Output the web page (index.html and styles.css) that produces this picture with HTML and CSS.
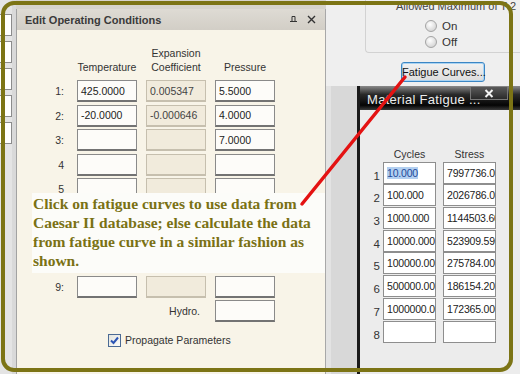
FILE: index.html
```html
<!DOCTYPE html>
<html lang="en">
<head>
  <meta charset="UTF-8">
  <meta name="viewport" content="width=device-width, initial-scale=1.0">
  <title>Edit Operating Conditions</title>
  <link rel="stylesheet" href="styles.css">
</head>
<body>
  <div class="screen">
    <!-- Edge of the window behind -->
    <div class="left-strip">
      <div class="stub"></div>
      <div class="stub"></div>
      <div class="stub"></div>
      <div class="stub"></div>
      <div class="stub"></div>
    </div>

    <!-- Edit Operating Conditions panel -->
    <section class="panel">
      <header class="panel-title">
        <span>Edit Operating Conditions</span>
        <span class="title-tools">
          <svg width="9" height="9" viewBox="0 0 9 9"><path d="M1 6.5h7M3 1.5v5M3 1.5h3v5" fill="none" stroke="#333" stroke-width="1"/></svg>
          <svg width="9" height="9" viewBox="0 0 9 9"><path d="M1 1l7 7M8 1l-7 7" stroke="#333" stroke-width="1.4"/></svg>
        </span>
      </header>
      <div class="panel-body">
        <div class="cond-grid">
          <span></span>
          <span class="head">Temperature</span>
          <span class="head">Expansion<br>Coefficient</span>
          <span class="head">Pressure</span>

          <span class="num">1:</span><div class="box">425.0000</div><div class="box off">0.005347</div><div class="box">5.5000</div>
          <span class="num">2:</span><div class="box">-20.0000</div><div class="box off">-0.000646</div><div class="box">4.0000</div>
          <span class="num">3:</span><div class="box"></div><div class="box off"></div><div class="box">7.0000</div>
          <span class="num">4</span><div class="box"></div><div class="box off"></div><div class="box"></div>
          <span class="num">5</span><div class="box"></div><div class="box off"></div><div class="box"></div>
          <span class="num"></span><div class="box"></div><div class="box off"></div><div class="box"></div>
          <span class="num"></span><div class="box"></div><div class="box off"></div><div class="box"></div>
          <span class="num"></span><div class="box"></div><div class="box off"></div><div class="box"></div>
          <span class="num">9:</span><div class="box"></div><div class="box off"></div><div class="box"></div>
          <span class="hydro">Hydro.</span><div class="box"></div>
        </div>
        <label class="propagate">
          <span class="check">
            <svg width="11" height="11" viewBox="0 0 11 11"><path d="M2 5.5l2.5 2.5 4.5-5.5" fill="none" stroke="#2c55b4" stroke-width="2"/></svg>
          </span>
          Propagate Parameters
        </label>
      </div>
    </section>

    <!-- Right side of the main dialog -->
    <div class="right">
      <div class="group">
        <div class="legend">Allowed Maximum of T 2</div>
        <div class="radio"><span class="dot"></span>On</div>
        <div class="radio"><span class="dot"></span>Off</div>
      </div>
      <button class="fatigue-btn">Fatigue Curves...</button>

      <div class="lower">
        <div class="gutter"></div>
        <div class="window">
          <div class="win-title">
            <span class="win-name">Material Fatigue ...</span>
            <span class="win-close">
              <svg width="10" height="9" viewBox="0 0 10 9"><path d="M1.5 1l7 7M8.5 1l-7 7" stroke="#f2f2f2" stroke-width="2"/></svg>
            </span>
          </div>
          <div class="win-body">
            <div class="fatigue-grid">
              <span></span><span class="fhead">Cycles</span><span class="fhead">Stress</span>
              <span class="fnum">1</span><div class="fbox"><span class="sel">10.000</span></div><div class="fbox">7997736.000</div>
              <span class="fnum">2</span><div class="fbox">100.000</div><div class="fbox">2026786.000</div>
              <span class="fnum">3</span><div class="fbox">1000.000</div><div class="fbox">1144503.600</div>
              <span class="fnum">4</span><div class="fbox">10000.000</div><div class="fbox">523909.590</div>
              <span class="fnum">5</span><div class="fbox">100000.000</div><div class="fbox">275784.000</div>
              <span class="fnum">6</span><div class="fbox">500000.000</div><div class="fbox">186154.200</div>
              <span class="fnum">7</span><div class="fbox">1000000.000</div><div class="fbox">172365.000</div>
              <span class="fnum">8</span><div class="fbox"></div><div class="fbox"></div>
            </div>
          </div>
        </div>
      </div>
    </div>

    <!-- Annotation over the screenshot -->
    <div class="callout">
      Click on fatigue curves to use data from<br>
      Caesar II database; else calculate the data<br>
      from fatigue curve in a similar fashion as<br>
      shown.
    </div>
    <svg class="pointer" width="520" height="374" viewBox="0 0 520 374">
      <line x1="405" y1="77" x2="302" y2="204" stroke="#e41212" stroke-width="3.5" stroke-linecap="round"/>
    </svg>
    <div class="frame"></div>
  </div>
</body>
</html>
```

FILE: styles.css
```css
/* Base Reset */
body {
  margin: 0;
  background: #c8c8c8;
  font-family: 'Liberation Sans', Arial, sans-serif;
  font-size: 10.5px;
  color: #222;
}

.screen {
  position: relative;
  display: flex;
  width: 520px;
  height: 374px;
  overflow: hidden;
  background: #d6d3cc;
}

/* Left edge with the fields of the window behind */
.left-strip {
  width: 12px;
  flex-shrink: 0;
  display: flex;
  flex-direction: column;
  gap: 5px;
  padding-top: 14px;
  background: #e4e4e4;
  border-right: 4px solid #d9d9d9;
}

.stub {
  height: 20px;
  background: #fff;
  border: 1px solid #8c8c8c;
  border-left: none;
}

/* Edit Operating Conditions panel */
.panel {
  width: 308px;
  flex-shrink: 0;
  margin-top: 9px;
  display: flex;
  flex-direction: column;
  border-left: 1px solid #a2a2a2;
  border-right: 1px solid #a8a8a8;
  background: #f8f4e8;
}

.panel-title {
  height: 21px;
  display: flex;
  align-items: center;
  justify-content: space-between;
  padding: 0 9px 0 8px;
  background: linear-gradient(#dedbd4, #d2cec6);
  font-weight: bold;
  font-size: 11px;
  color: #3a3a3a;
}

.title-tools {
  display: flex;
  gap: 9px;
}

.panel-body {
  padding-top: 16px;
}

.cond-grid {
  display: grid;
  grid-template-columns: 51px 60px 60px 60px;
  grid-template-rows: 32px;
  grid-auto-rows: 22px;
  column-gap: 9px;
  row-gap: 2.4px;
}

.head {
  align-self: end;
  padding-bottom: 4px;
  text-align: center;
  line-height: 14px;
  color: #333;
  white-space: nowrap;
}

.num {
  align-self: center;
  text-align: right;
  padding-right: 4px;
  color: #333;
}

.box {
  box-sizing: border-box;
  display: flex;
  align-items: center;
  padding-left: 3px;
  background: #fdfcf9;
  border: 1px solid #8a8a8a;
  border-bottom: 2px solid #737373;
  white-space: nowrap;
  overflow: hidden;
}

.box.off {
  background: #f1ebdc;
  border-color: #c6bfae;
  color: #444;
}

.hydro {
  grid-column: 1 / 4;
  align-self: center;
  text-align: right;
  padding-right: 6px;
  color: #333;
}

.propagate {
  display: flex;
  align-items: center;
  gap: 4px;
  margin: 12px 0 0 91px;
  height: 13px;
  color: #333;
}

.check {
  box-sizing: border-box;
  width: 13px;
  height: 13px;
  display: flex;
  align-items: center;
  justify-content: center;
  border: 1px solid #4b6a94;
  background: linear-gradient(135deg, #e4e4de, #fbfbf9);
}

/* Right side */
.right {
  flex: 1;
  min-width: 0;
  display: flex;
  flex-direction: column;
  background: #efefef;
}

.group {
  height: 59px;
  box-sizing: border-box;
  margin: -6px 0 0 39px;
  padding: 5px 0 0 59px;
  border: 1px solid #d2d2d2;
  border-right: none;
  border-radius: 4px 0 0 4px;
}

.legend {
  height: 12px;
  line-height: 12px;
  margin-left: -29px;
  font-size: 11px;
  color: #444;
  white-space: nowrap;
}

.group .legend + .radio {
  margin-top: 6px;
}

.radio {
  height: 16px;
  display: flex;
  align-items: center;
  gap: 5px;
  font-size: 11.5px;
  color: #333;
}

.dot {
  width: 10px;
  height: 10px;
  border-radius: 50%;
  border: 1px solid #a4a4a4;
  background: radial-gradient(circle at 40% 35%, #ffffff, #c9c9c9);
}

.fatigue-btn {
  width: 84px;
  height: 20px;
  margin: 9px 0 0 75px;
  padding: 0;
  border: 1px solid #3b86c4;
  border-radius: 3px;
  background: linear-gradient(#f2f2f2, #dcdcdc);
  box-shadow: inset 0 0 0 1px #a9d3f2;
  font-family: 'Liberation Sans', Arial, sans-serif;
  font-size: 11px;
  color: #111;
  white-space: nowrap;
}

.lower {
  flex: 1;
  display: flex;
  margin-top: 4px;
}

.gutter {
  width: 31px;
  flex-shrink: 0;
  background: #d8d8d8;
  border-left: 5px solid #e3e3e3;
  box-sizing: border-box;
}

/* Material Fatigue window */
.window {
  flex: 1;
  min-width: 0;
  display: flex;
  flex-direction: column;
  border-left: 3px solid #1a1a1a;
  background: #ececec;
}

.win-title {
  position: relative;
  height: 24px;
  background: linear-gradient(#8a8a8a, #2a2a2a 35%, #050505 80%, #3a3a3a);
  color: #ececec;
  font-size: 13px;
}

.win-name {
  display: block;
  padding: 6px 0 0 7px;
  letter-spacing: 0.3px;
  white-space: nowrap;
}

/* close button sits over the end of the caption */
.win-close {
  position: absolute;
  top: 1px;
  right: 12px;
  width: 36px;
  height: 12px;
  display: flex;
  align-items: center;
  justify-content: center;
  background: linear-gradient(#5a5a5a, #2a2a2a);
  border: 1px solid #777;
  border-top: none;
}

.win-body {
  padding-top: 37px;
}

.fatigue-grid {
  display: grid;
  grid-template-columns: 23px 60px 53px;
  grid-template-rows: 14px;
  grid-auto-rows: 22px;
  row-gap: 0.7px;
}

.fatigue-grid .fhead:nth-child(2) {
  width: 53px;
}

.fhead {
  text-align: center;
  line-height: 14px;
  margin-bottom: 3px;
  color: #333;
}

.fnum {
  align-self: end;
  text-align: right;
  padding: 0 3px 2px 0;
  font-size: 11.5px;
  color: #333;
}

.fbox {
  box-sizing: border-box;
  width: 53px;
  display: flex;
  align-items: center;
  padding-left: 3px;
  background: #fff;
  border: 1px solid #8e8e8e;
  white-space: nowrap;
  overflow: hidden;
  color: #222;
  letter-spacing: -0.2px;
}

.sel {
  background: #b2cff0;
  color: #1f4a9a;
}

/* Annotation */
.callout {
  position: absolute;
  left: 32px;
  top: 193px;
  width: 293px;
  height: 80px;
  box-sizing: border-box;
  padding: 1px 0 0 1px;
  background: #fcfcf9;
  font-family: 'Liberation Serif', 'Times New Roman', serif;
  font-weight: bold;
  font-size: 15.5px;
  line-height: 19px;
  color: #7a7114;
  white-space: nowrap;
}

.pointer {
  position: absolute;
  left: 0;
  top: 0;
  pointer-events: none;
}

.frame {
  position: absolute;
  left: 1px;
  top: 1px;
  width: 512px;
  height: 371px;
  box-sizing: border-box;
  border: 4px solid #7c7415;
  border-radius: 13px;
  pointer-events: none;
}
```
